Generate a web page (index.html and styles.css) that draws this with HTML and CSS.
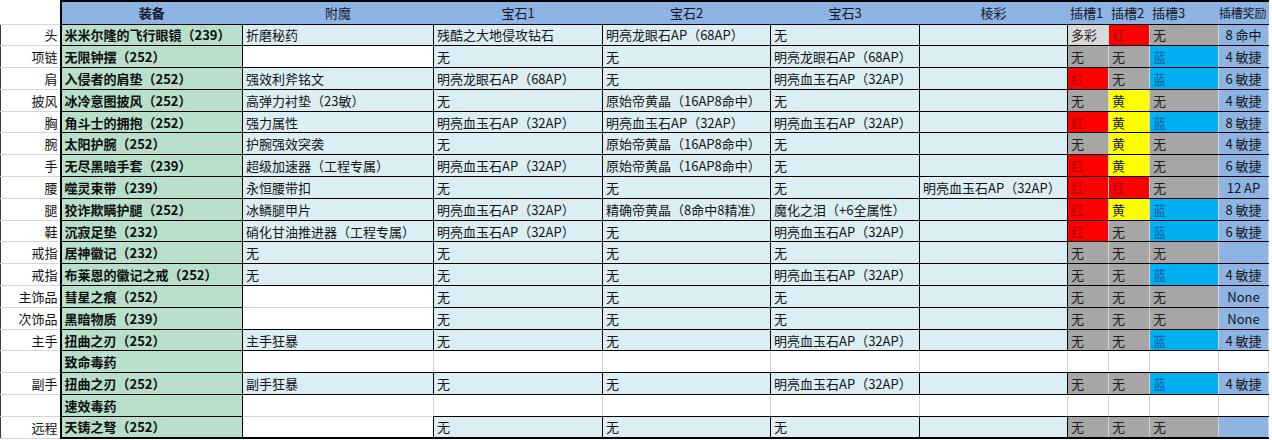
FILE: index.html
```html
<!DOCTYPE html>
<html lang="zh-CN">
<head>
<meta charset="utf-8">
<title>装备配置</title>
<link rel="stylesheet" href="styles.css">
</head>
<body>
<table class="sheet">
  <colgroup>
    <col class="c-lbl"><col class="c-eq"><col class="c-en"><col class="c-g1"><col class="c-g2"><col class="c-g3"><col class="c-pr"><col class="c-s1"><col class="c-s2"><col class="c-s3"><col class="c-rw">
  </colgroup>
  <thead>
    <tr class="hd">
      <td class="lbl lbl-hd"></td>
      <th class="eqh">装备</th>
      <th>附魔</th>
      <th>宝石1</th>
      <th>宝石2</th>
      <th>宝石3</th>
      <th>棱彩</th>
      <th class="sh">插槽1</th>
      <th class="sh">插槽2</th>
      <th class="sh">插槽3</th>
      <th class="sh rwh">插槽奖励</th>
    </tr>
  </thead>
  <tbody>
    <tr>
      <td class="lbl">头</td><td class="eq">米米尔隆的飞行眼镜（239）</td><td class="f">折磨秘药</td><td class="f">残酷之大地侵攻钻石</td><td class="f">明亮龙眼石AP（68AP）</td><td class="f">无</td><td class="f"></td>
      <td class="s m">多彩</td><td class="s r">红</td><td class="s g">无</td><td class="rw">8 命中</td>
    </tr>
    <tr>
      <td class="lbl">项链</td><td class="eq">无限钟摆（252）</td><td class="w"></td><td class="f">无</td><td class="f">无</td><td class="f">明亮龙眼石AP（68AP）</td><td class="f"></td>
      <td class="s g">无</td><td class="s g">无</td><td class="s b">蓝</td><td class="rw">4 敏捷</td>
    </tr>
    <tr>
      <td class="lbl">肩</td><td class="eq">入侵者的肩垫（252）</td><td class="f">强效利斧铭文</td><td class="f">明亮龙眼石AP（68AP）</td><td class="f">无</td><td class="f">明亮血玉石AP（32AP）</td><td class="f"></td>
      <td class="s r">红</td><td class="s g">无</td><td class="s b">蓝</td><td class="rw">6 敏捷</td>
    </tr>
    <tr>
      <td class="lbl">披风</td><td class="eq">冰冷意图披风（252）</td><td class="f">高弹力衬垫（23敏）</td><td class="f">无</td><td class="f">原始帝黄晶（16AP8命中）</td><td class="f">无</td><td class="f"></td>
      <td class="s g">无</td><td class="s y">黄</td><td class="s g">无</td><td class="rw">4 敏捷</td>
    </tr>
    <tr>
      <td class="lbl">胸</td><td class="eq">角斗士的拥抱（252）</td><td class="f">强力属性</td><td class="f">明亮血玉石AP（32AP）</td><td class="f">明亮血玉石AP（32AP）</td><td class="f">明亮血玉石AP（32AP）</td><td class="f"></td>
      <td class="s r">红</td><td class="s y">黄</td><td class="s b">蓝</td><td class="rw">8 敏捷</td>
    </tr>
    <tr>
      <td class="lbl">腕</td><td class="eq">太阳护腕（252）</td><td class="f">护腕强效突袭</td><td class="f">无</td><td class="f">原始帝黄晶（16AP8命中）</td><td class="f">无</td><td class="f"></td>
      <td class="s g">无</td><td class="s y">黄</td><td class="s g">无</td><td class="rw">4 敏捷</td>
    </tr>
    <tr>
      <td class="lbl">手</td><td class="eq">无尽黑暗手套（239）</td><td class="f">超级加速器（工程专属）</td><td class="f">明亮血玉石AP（32AP）</td><td class="f">原始帝黄晶（16AP8命中）</td><td class="f">无</td><td class="f"></td>
      <td class="s r">红</td><td class="s y">黄</td><td class="s g">无</td><td class="rw">6 敏捷</td>
    </tr>
    <tr>
      <td class="lbl">腰</td><td class="eq">噬灵束带（239）</td><td class="f">永恒腰带扣</td><td class="f">无</td><td class="f">无</td><td class="f">无</td><td class="f">明亮血玉石AP（32AP）</td>
      <td class="s r">红</td><td class="s r">红</td><td class="s g">无</td><td class="rw">12 AP</td>
    </tr>
    <tr>
      <td class="lbl">腿</td><td class="eq">狡诈欺瞒护腿（252）</td><td class="f">冰鳞腿甲片</td><td class="f">明亮血玉石AP（32AP）</td><td class="f">精确帝黄晶（8命中8精准）</td><td class="f">魔化之泪（+6全属性）</td><td class="f"></td>
      <td class="s r">红</td><td class="s y">黄</td><td class="s b">蓝</td><td class="rw">8 敏捷</td>
    </tr>
    <tr>
      <td class="lbl">鞋</td><td class="eq">沉寂足垫（232）</td><td class="f">硝化甘油推进器（工程专属）</td><td class="f">明亮血玉石AP（32AP）</td><td class="f">无</td><td class="f">明亮血玉石AP（32AP）</td><td class="f"></td>
      <td class="s r">红</td><td class="s g">无</td><td class="s b">蓝</td><td class="rw">6 敏捷</td>
    </tr>
    <tr>
      <td class="lbl">戒指</td><td class="eq">居神徽记（232）</td><td class="f">无</td><td class="f">无</td><td class="f">无</td><td class="f">无</td><td class="f"></td>
      <td class="s g">无</td><td class="s g">无</td><td class="s g">无</td><td class="rw"></td>
    </tr>
    <tr>
      <td class="lbl">戒指</td><td class="eq">布莱恩的徽记之戒（252）</td><td class="f">无</td><td class="f">无</td><td class="f">无</td><td class="f">明亮血玉石AP（32AP）</td><td class="f"></td>
      <td class="s g">无</td><td class="s g">无</td><td class="s b">蓝</td><td class="rw">4 敏捷</td>
    </tr>
    <tr>
      <td class="lbl">主饰品</td><td class="eq">彗星之痕（252）</td><td class="w"></td><td class="f">无</td><td class="f">无</td><td class="f">无</td><td class="f"></td>
      <td class="s g">无</td><td class="s g">无</td><td class="s g">无</td><td class="rw">None</td>
    </tr>
    <tr>
      <td class="lbl">次饰品</td><td class="eq">黑暗物质（239）</td><td class="w"></td><td class="f">无</td><td class="f">无</td><td class="f">无</td><td class="f"></td>
      <td class="s g">无</td><td class="s g">无</td><td class="s g">无</td><td class="rw">None</td>
    </tr>
    <tr>
      <td class="lbl">主手</td><td class="eq">扭曲之刃（252）</td><td class="f">主手狂暴</td><td class="f">无</td><td class="f">无</td><td class="f">明亮血玉石AP（32AP）</td><td class="f"></td>
      <td class="s g">无</td><td class="s g">无</td><td class="s b">蓝</td><td class="rw">4 敏捷</td>
    </tr>
    <tr>
      <td class="lbl"></td><td class="eq">致命毒药</td><td class="w"></td><td class="w"></td><td class="w"></td><td class="w"></td><td class="w"></td>
      <td class="w"></td><td class="w"></td><td class="w"></td><td class="w"></td>
    </tr>
    <tr>
      <td class="lbl">副手</td><td class="eq">扭曲之刃（252）</td><td class="f">副手狂暴</td><td class="f">无</td><td class="f">无</td><td class="f">明亮血玉石AP（32AP）</td><td class="f"></td>
      <td class="s g">无</td><td class="s g">无</td><td class="s b">蓝</td><td class="rw">4 敏捷</td>
    </tr>
    <tr>
      <td class="lbl"></td><td class="eq">速效毒药</td><td class="w"></td><td class="w"></td><td class="w"></td><td class="w"></td><td class="w"></td>
      <td class="w"></td><td class="w"></td><td class="w"></td><td class="w"></td>
    </tr>
    <tr class="last">
      <td class="lbl">远程</td><td class="eq">天铸之弩（252）</td><td class="w"></td><td class="f">无</td><td class="f">无</td><td class="f">无</td><td class="f"></td>
      <td class="s g">无</td><td class="s g">无</td><td class="s g">无</td><td class="rw"></td>
    </tr>
  </tbody>
</table>
</body>
</html>
```

FILE: styles.css
```css
html, body {
  margin: 0;
  padding: 0;
  background: #ffffff;
}

.sheet {
  border-collapse: collapse;
  table-layout: fixed;
  width: 1268px;
  font-family: "Noto Sans CJK SC", "Noto Sans", sans-serif;
  font-size: 13px;
  color: #141414;
}

.c-lbl { width: 60px; }
.c-eq { width: 182px; }
.c-en { width: 191px; }
.c-g1 { width: 169px; }
.c-g2 { width: 168px; }
.c-g3 { width: 149px; }
.c-pr { width: 148px; }
.c-s1 { width: 41px; }
.c-s2 { width: 41px; }
.c-s3 { width: 69px; }
.c-rw { width: 50px; }

.sheet tr { height: 21.8px; }
.sheet tr.hd { height: 23px; }

.sheet td,
.sheet th {
  border: 1px solid #d4d4d4;
  padding: 0 3px;
  line-height: 17px;
  white-space: nowrap;
  overflow: hidden;
  vertical-align: middle;
  text-align: left;
  font-weight: normal;
}

/* header */
.sheet th {
  background: #8db4e2;
  text-align: center;
  color: #14182a;
  border-top: 2px solid #000;
  border-bottom: 1px double #000;
  border-left: 1px solid #8db4e2;
  border-right: 1px solid #8db4e2;
}
.sheet th.eqh {
  font-weight: bold;
  border-left: 2px solid #000;
}
.sheet th.sh {
  text-align: left;
  padding: 0 1px 0 2px;
}
.sheet th.rwh {
  padding: 0;
  font-size: 12px;
  letter-spacing: -0.2px;
}
.sheet td.lbl-hd {
  border-top: none;
  border-left: none;
}

/* slot label column */
.sheet td.lbl {
  text-align: right;
  padding: 0 2px 0 0;
  background: #ffffff;
}
.sheet tbody td.lbl {
  border-left: 1px solid #3a3a3a;
}

/* equipment */
.sheet td.eq {
  background: #b8dfca;
  font-weight: bold;
  color: #0e0e0e;
  border: 1px double #000;
  border-left: 2px solid #000;
}

/* filled light blue cells */
.sheet td.f {
  background: #daeef3;
  border: 1px double #000;
}

.sheet td.w {
  background: #ffffff;
}

/* sockets */
.sheet td.s {
  border-top: 1px double #000;
  border-bottom: 1px double #000;
}
.sheet td.g { background: #a6a6a6; color: #1e1e1e; }
.sheet td.m { background: #d9d9d9; color: #1e1e1e; }
.sheet td.r { background: #ff0000; color: #a80000; }
.sheet td.y { background: #ffff00; color: #1e1e1e; }
.sheet td.b { background: #00b0f0; color: #0b5a9e; }

/* socket bonus */
.sheet td.rw {
  background: #8db4e2;
  text-align: center;
  padding: 0;
  border-top: 1px double #000;
  border-bottom: 1px double #000;
}

/* bottom thick edge */
.sheet tr.last td:not(.lbl) {
  border-bottom: 2px solid #000;
}
```
